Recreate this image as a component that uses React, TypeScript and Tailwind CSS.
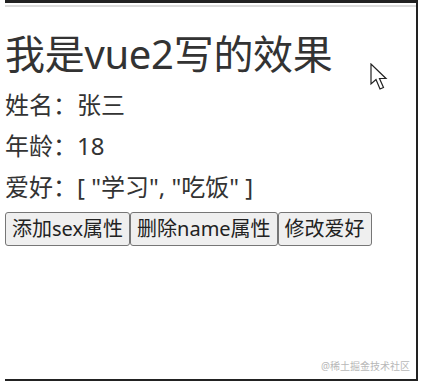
import React from "react";

const font = { fontFamily: '"Noto Sans", "Noto Sans CJK SC", sans-serif' };

function Cursor() {
  return (
    <svg width="20" height="30" viewBox="0 0 20 30" className="absolute left-[370px] top-[63px]">
      <path d="M1 1 L1 21 L6 16.5 L10 26 L13.5 24.5 L9.5 15.5 L16 15.5 Z" fill="white" stroke="#222" strokeWidth="1.2" strokeLinejoin="miter" />
    </svg>
  );
}

export default function App() {
  const btn =
    "h-[34px] rounded-[3px] border border-[#767676] bg-[#efefef] px-[6px] text-[20px] leading-none text-[#222]";
  return (
    <div className="relative h-[382px] w-[421px] overflow-hidden bg-white text-[#333]" style={font}>
      <div className="ml-[5px] flex h-[381px] w-[413px] flex-col border-b-2 border-r-2 border-t-[3px] border-[#222]">
        <div className="mt-[2px] h-[2px] bg-[#dcdcdc]" />
        <div className="flex flex-1 flex-col pt-[24px]">
          <h1 className="h-[53px] text-[40px] leading-[45px] tracking-[-0.3px]">我是vue2写的效果</h1>
          <div className="h-[41px] text-[24px] leading-[41px]">姓名：张三</div>
          <div className="h-[41px] text-[24px] leading-[41px]">年龄：18</div>
          <div className="h-[41px] text-[24px] leading-[41px]">爱好：[ "学习", "吃饭" ]</div>
          <div className="mt-[5px] flex">
            <button className={btn} style={font}>添加sex属性</button>
            <button className={btn} style={font}>删除name属性</button>
            <button className={btn} style={font}>修改爱好</button>
          </div>
          <div className="mt-auto mb-[5px] mr-[6px] self-end text-[10px] text-[#b8b8b8]">@稀土掘金技术社区</div>
        </div>
      </div>
      <Cursor />
    </div>
  );
}
